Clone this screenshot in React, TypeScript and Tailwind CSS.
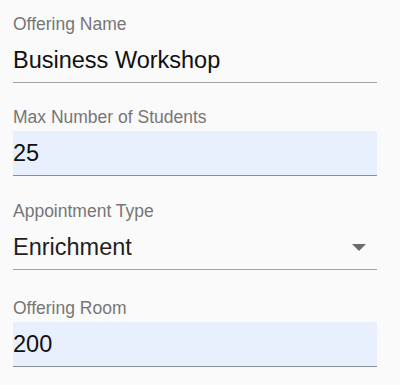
import React from "react";

type Field = {
  label: string;
  value: string;
  filled?: boolean;
  select?: boolean;
  gap: string;
};

const fields: Field[] = [
  { label: "Offering Name", value: "Business Workshop", gap: "mt-[14px]" },
  { label: "Max Number of Students", value: "25", filled: true, gap: "mt-[24px]" },
  { label: "Appointment Type", value: "Enrichment", select: true, gap: "mt-[25px]" },
  { label: "Offering Room", value: "200", filled: true, gap: "mt-[28px]" },
];

function FormField({ field }: { field: Field }) {
  return (
    <div className={field.gap}>
      <div className="text-[17.5px] leading-[20px] text-[#767676]">{field.label}</div>
      <div
        className={
          "mt-[4px] h-[45px] flex items-center justify-between border-b-[1.5px] " +
          (field.filled ? "bg-[#e8f0fe] border-[#8a8d94]" : "border-[#a2a2a2]")
        }
      >
        <span className={"text-[23.5px] leading-[45px] " + (field.select ? "text-[#1f1f1f]" : "text-[#111]")}>
          {field.value}
        </span>
        {field.select && (
          <span className="mr-[11px] w-0 h-0 border-l-[7px] border-r-[7px] border-t-[7px] border-l-transparent border-r-transparent border-t-[#6b6b6b]" />
        )}
      </div>
    </div>
  );
}

export default function App() {
  return (
    <div
      className="w-[400px] h-[385px] bg-[#fafafa] overflow-hidden"
      style={{ fontFamily: '"Liberation Sans", Arial, sans-serif' }}
    >
      <div className="flex flex-col w-[364px] ml-[13px]">
        {fields.map((f) => (
          <FormField key={f.label} field={f} />
        ))}
      </div>
    </div>
  );
}
